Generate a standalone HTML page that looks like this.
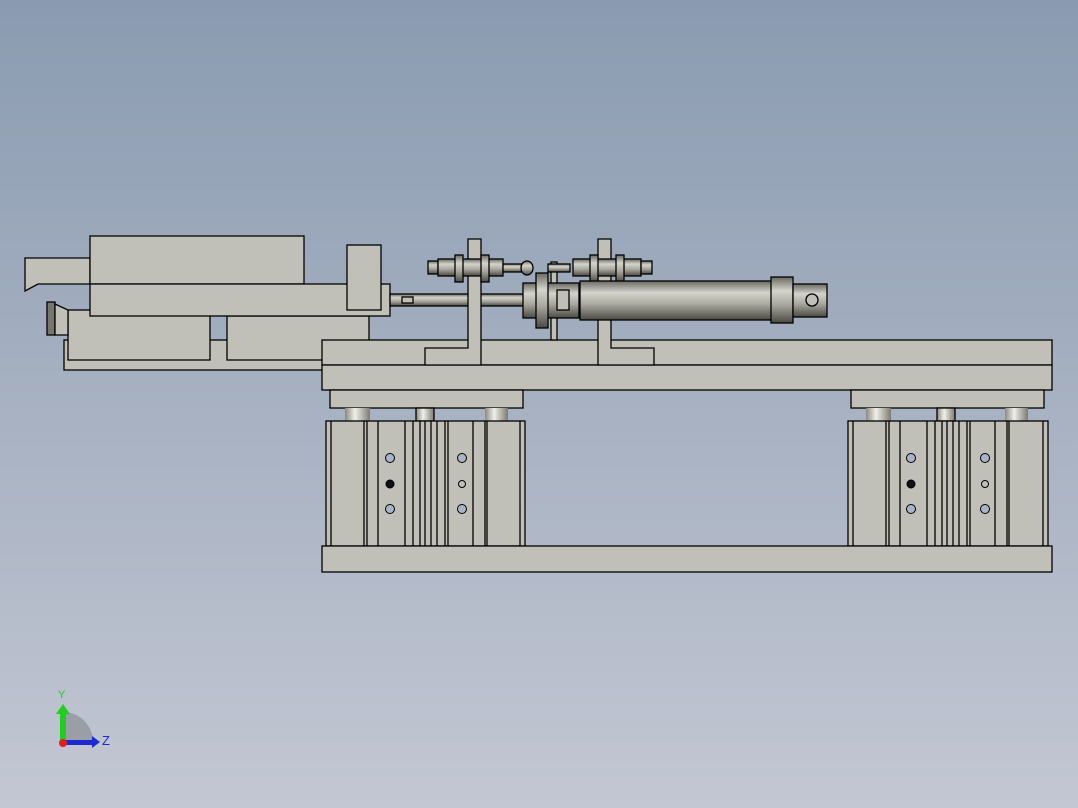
<!DOCTYPE html>
<html><head><style>
html,body{margin:0;padding:0;width:1078px;height:808px;overflow:hidden}
body{background:linear-gradient(#8a9bb1 0%,#a4afc0 45%,#c3c7d3 100%);font-family:"Liberation Sans",sans-serif}
</style></head><body>
<svg width="1078" height="808" viewBox="0 0 1078 808" xmlns="http://www.w3.org/2000/svg">
<defs>
<linearGradient id="m" x1="0" y1="0" x2="0" y2="1">
<stop offset="0" stop-color="#6a6a62"/><stop offset="0.3" stop-color="#d4d4cc"/><stop offset="0.6" stop-color="#a8a89f"/><stop offset="1" stop-color="#4a4a44"/></linearGradient>
<linearGradient id="r" x1="0" y1="0" x2="1" y2="0">
<stop offset="0" stop-color="#8a8a82"/><stop offset="0.4" stop-color="#f0f0ea"/><stop offset="1" stop-color="#7a7a72"/></linearGradient>
</defs>
<g stroke="#000" stroke-width="1.3" fill="#c0c0b8">
<!-- left assembly -->
<rect x="64" y="340" width="300" height="30"/>
<rect x="68" y="310" width="142" height="50"/>
<rect x="227" y="316" width="142" height="44"/>
<rect x="47" y="302" width="8" height="33" fill="#76766c"/>
<polygon points="55,304 68,310 68,335 55,335"/>
<polygon points="25,258 90,258 90,284 38,284 25,291"/>
<rect x="90" y="236" width="214" height="48"/>
<rect x="90" y="284" width="300" height="32"/>
<rect x="347" y="245" width="34" height="65"/>
<!-- rod -->
<rect x="390" y="294" width="135" height="12" fill="url(#m)"/>
<rect x="402" y="297" width="11" height="6" fill="#c0c0b8"/>
<!-- base plates -->
<rect x="322" y="340" width="730" height="25"/>
<rect x="322" y="365" width="730" height="25"/>
<!-- brackets -->
<polygon points="468,239 481,239 481,365 425,365 425,348 468,348"/>
<polygon points="598,239 611,239 611,348 654,348 654,365 598,365"/>
<rect x="551" y="262" width="6" height="78"/>
<!-- sensors -->
<rect x="428" y="261" width="10" height="13" fill="url(#m)"/>
<rect x="438" y="259" width="65" height="17" fill="url(#m)"/>
<rect x="455" y="255" width="8" height="27" fill="url(#m)"/>
<rect x="481" y="255" width="8" height="27" fill="url(#m)"/>
<rect x="503" y="264" width="20" height="8" fill="url(#m)"/>
<ellipse cx="527" cy="268" rx="6" ry="7" fill="url(#m)"/>
<rect x="548" y="264" width="22" height="8" fill="url(#m)"/>
<rect x="573" y="259" width="68" height="17" fill="url(#m)"/>
<rect x="641" y="261" width="11" height="13" fill="url(#m)"/>
<rect x="590" y="255" width="8" height="27" fill="url(#m)"/>
<rect x="616" y="255" width="8" height="27" fill="url(#m)"/>
<!-- cylinder -->
<rect x="523" y="283" width="56" height="35" fill="url(#m)"/>
<rect x="536" y="273" width="12" height="55" fill="url(#m)"/>
<rect x="557" y="290" width="12" height="20" fill="#c0c0b8"/>
<rect x="580" y="281" width="192" height="39" fill="url(#m)"/>
<rect x="771" y="277" width="22" height="46" fill="url(#m)"/>
<rect x="793" y="284" width="34" height="33" fill="url(#m)"/>
<circle cx="812" cy="300" r="6" fill="#c0c0b8"/>
<!-- left cylinder unit -->
<rect x="330" y="390" width="193" height="18"/>
<rect x="345" y="408" width="25" height="13" fill="url(#r)" stroke="none"/>
<rect x="485" y="408" width="23" height="13" fill="url(#r)" stroke="none"/>
<rect x="416" y="408" width="18" height="13" fill="url(#r)"/>
<rect x="326" y="421" width="199" height="125"/>
<!-- right cylinder unit -->
<rect x="851" y="390" width="193" height="18"/>
<rect x="866" y="408" width="25" height="13" fill="url(#r)" stroke="none"/>
<rect x="1005" y="408" width="23" height="13" fill="url(#r)" stroke="none"/>
<rect x="937" y="408" width="18" height="13" fill="url(#r)"/>
<rect x="848" y="421" width="200" height="125"/>
<rect x="322" y="546" width="730" height="26"/>
</g>
<g stroke="#000" stroke-width="1.3" fill="none">
<path d="M331 421V546M364 421V546M367 421V546M378 421V546M405 421V546M413 421V546M420 421V546M425 421V546M431 421V546M437 421V546M445 421V546M448 421V546M473 421V546M485 421V546M487 421V546M520 421V546"/>
<path d="M853 421V546M886 421V546M889 421V546M900 421V546M927 421V546M935 421V546M942 421V546M947 421V546M953 421V546M959 421V546M967 421V546M970 421V546M995 421V546M1007 421V546M1009 421V546M1043 421V546"/>
</g>
<g stroke="#000" fill="#a8b4c8">
<circle cx="390" cy="458" r="4.5"/><circle cx="390" cy="509" r="4.5"/><circle cx="390" cy="484" r="4" fill="#111"/>
<circle cx="462" cy="458" r="4.5"/><circle cx="462" cy="509" r="4.5"/><circle cx="462" cy="484" r="3.5" fill="none"/>
<circle cx="911" cy="458" r="4.5"/><circle cx="911" cy="509" r="4.5"/><circle cx="911" cy="484" r="4" fill="#111"/>
<circle cx="985" cy="458" r="4.5"/><circle cx="985" cy="509" r="4.5"/><circle cx="985" cy="484" r="3.5" fill="none"/>
</g>
<!-- axis triad -->
<path d="M63 742V712A30 30 0 0 1 93 742Z" fill="#9a9ea6"/>
<rect x="60" y="712" width="6" height="30" fill="#22cc22"/>
<polygon points="56,714 63,704 70,714" fill="#22cc22"/>
<rect x="63" y="740" width="30" height="5" fill="#1a2ad0"/>
<polygon points="92,736 100,742 92,748" fill="#1a2ad0"/>
<circle cx="63" cy="743" r="4" fill="#e02020"/>
<text x="58" y="698" font-size="11" fill="#22cc22">Y</text>
<text x="102" y="745" font-size="13" fill="#1a2ad0">Z</text>
</svg>
</body></html>
